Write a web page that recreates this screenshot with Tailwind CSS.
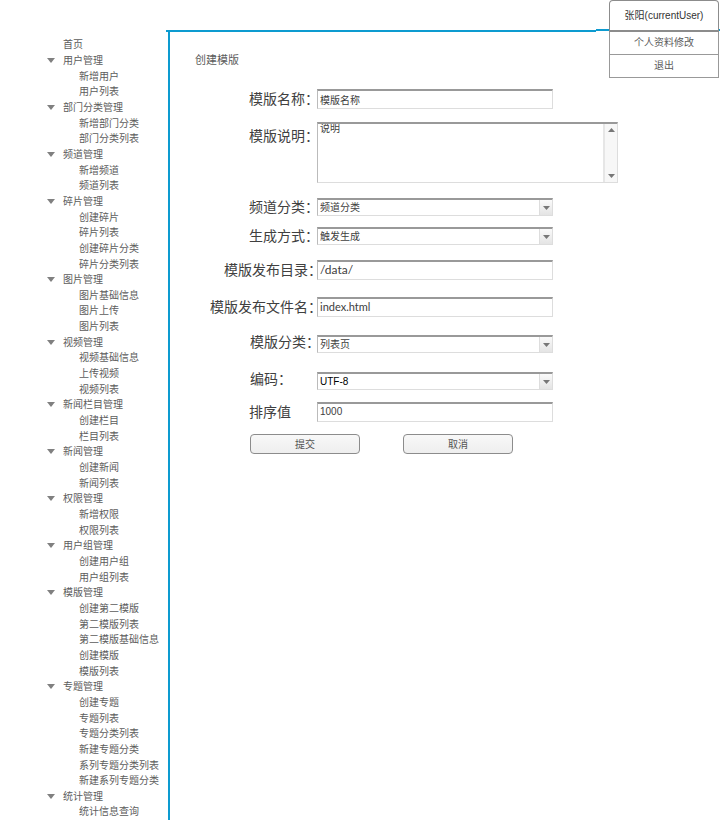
<!DOCTYPE html>
<html lang="zh-CN">
<head>
<meta charset="utf-8">
<meta name="viewport" content="width=device-width, initial-scale=1">
<title>创建模版</title>
<script src="https://cdn.jsdelivr.net/npm/@tailwindcss/browser@4"></script>
</head>
<body class="flex min-h-screen flex-col bg-white font-['Liberation_Sans','Noto_Sans_CJK_SC',sans-serif] text-[10px] leading-[15px] text-[#5c5c5c]">
<header class="ml-[166px] flex h-8 items-start">
  <div class="h-8 flex-1 border-b-2 border-[#0d9bd0]"></div>
  <div class="relative h-[31px] w-[124px] border-b-2 border-[#0d9bd0]">
    <div class="absolute top-0 right-px w-[110px] bg-white text-center">
      <button type="button" class="block h-8 w-full rounded-t border border-b-2 border-[#8c8c8c] text-[#333]">张阳(currentUser)</button>
      <a href="#" class="block h-[23px] border border-t-0 border-[#999] leading-[22px]">个人资料修改</a>
      <a href="#" class="block h-[23px] border border-t-0 border-[#999] leading-[22px]">退出</a>
    </div>
  </div>
</header>
<div class="flex flex-1">
  <nav class="flex w-[168px] shrink-0 flex-col pt-[5px]" aria-label="主导航">
    <ul id="menu" class="flex flex-1 flex-col whitespace-nowrap"></ul>
  </nav>
  <main class="flex-1 border-l-2 border-[#0d9bd0]">
    <h1 class="mt-5 ml-[25px] text-[11px] leading-4">创建模版</h1>
    <form class="mt-[21px] ml-10 text-[#404040]">
      <div class="flex">
        <label for="name" class="w-[107px] shrink-0 pl-[39px] text-sm leading-5 whitespace-nowrap">模版名称：</label>
        <input id="name" value="模版名称" class="h-5 w-[236px] border border-t-2 border-[#ddd] border-t-[#999] border-l-[#bbb] bg-white px-0.5 outline-none">
      </div>
      <div class="mt-[13px] flex">
        <label for="desc" class="w-[107px] shrink-0 pt-1 pl-[39px] text-sm leading-5 whitespace-nowrap">模版说明：</label>
        <div class="flex h-[61px] w-[301px] border border-t-2 border-[#ddd] border-t-[#999] border-l-[#bbb] bg-white">
          <textarea id="desc" class="flex-1 resize-none overflow-hidden px-0.5 leading-[10px] outline-none">说明</textarea>
          <div class="flex w-[14px] flex-col items-center justify-between border-l-2 border-[#e6e6e6] bg-[#f7f7f7] py-1 text-[#777]">
            <svg class="h-1 w-[7px]" viewBox="0 0 7 4" fill="currentColor" aria-hidden="true"><path d="M3.5 0 7 4H0Z"/></svg>
            <svg class="h-1 w-[7px]" viewBox="0 0 7 4" fill="currentColor" aria-hidden="true"><path d="M0 0H7L3.5 4Z"/></svg>
          </div>
        </div>
      </div>
      <div class="mt-[15px] flex">
        <label for="channel" class="w-[107px] shrink-0 pl-[39px] text-sm leading-[18px] whitespace-nowrap">频道分类：</label>
        <div class="relative h-[18px] w-[236px]">
          <select id="channel" class="block h-full w-full appearance-none border border-t-2 border-[#ddd] border-t-[#999] border-l-[#bbb] bg-white px-0.5 leading-[15px] outline-none"><option>频道分类</option></select>
          <span class="pointer-events-none absolute top-0.5 right-px bottom-px flex w-[13px] items-center justify-center border-l border-[#ddd] bg-linear-to-b from-[#fafafa] to-[#e4e4e4] text-[#777]"><svg class="h-1 w-[7px]" viewBox="0 0 7 4" fill="currentColor" aria-hidden="true"><path d="M0 0H7L3.5 4Z"/></svg></span>
        </div>
      </div>
      <div class="mt-[11px] flex">
        <label for="mode" class="w-[107px] shrink-0 pl-[39px] text-sm leading-[18px] whitespace-nowrap">生成方式：</label>
        <div class="relative h-[18px] w-[236px]">
          <select id="mode" class="block h-full w-full appearance-none border border-t-2 border-[#ddd] border-t-[#999] border-l-[#bbb] bg-white px-0.5 leading-[15px] outline-none"><option>触发生成</option></select>
          <span class="pointer-events-none absolute top-0.5 right-px bottom-px flex w-[13px] items-center justify-center border-l border-[#ddd] bg-linear-to-b from-[#fafafa] to-[#e4e4e4] text-[#777]"><svg class="h-1 w-[7px]" viewBox="0 0 7 4" fill="currentColor" aria-hidden="true"><path d="M0 0H7L3.5 4Z"/></svg></span>
        </div>
      </div>
      <div class="mt-[15px] flex">
        <label for="dir" class="w-[107px] shrink-0 pl-[14px] text-sm leading-5 whitespace-nowrap">模版发布目录：</label>
        <input id="dir" value="/data/" class="h-5 w-[236px] border border-t-2 border-[#ddd] border-t-[#999] border-l-[#bbb] bg-white px-0.5 pb-0.5 font-[Lato,sans-serif] text-xs outline-none">
      </div>
      <div class="mt-[17px] flex">
        <label for="file" class="w-[107px] shrink-0 text-sm leading-5 whitespace-nowrap">模版发布文件名：</label>
        <input id="file" value="index.html" class="h-5 w-[236px] border border-t-2 border-[#ddd] border-t-[#999] border-l-[#bbb] bg-white px-0.5 pb-0.5 font-[Lato,sans-serif] text-[11px] outline-none">
      </div>
      <div class="mt-[18px] flex">
        <label for="type" class="w-[107px] shrink-0 pl-10 text-sm leading-[14px] whitespace-nowrap">模版分类：</label>
        <div class="relative h-[18px] w-[236px]">
          <select id="type" class="block h-full w-full appearance-none border border-t-2 border-[#ddd] border-t-[#999] border-l-[#bbb] bg-white px-0.5 leading-[15px] outline-none"><option>列表页</option></select>
          <span class="pointer-events-none absolute top-0.5 right-px bottom-px flex w-[13px] items-center justify-center border-l border-[#ddd] bg-linear-to-b from-[#fafafa] to-[#e4e4e4] text-[#777]"><svg class="h-1 w-[7px]" viewBox="0 0 7 4" fill="currentColor" aria-hidden="true"><path d="M0 0H7L3.5 4Z"/></svg></span>
        </div>
      </div>
      <div class="mt-[19px] flex">
        <label for="enc" class="w-[107px] shrink-0 pl-10 text-sm leading-[14px] whitespace-nowrap">编码：</label>
        <div class="relative h-[18px] w-[236px]">
          <select id="enc" class="block h-full w-full appearance-none border border-t-2 border-[#ddd] border-t-[#999] border-l-[#bbb] bg-white px-0.5 leading-[15px] text-black outline-none"><option>UTF-8</option></select>
          <span class="pointer-events-none absolute top-0.5 right-px bottom-px flex w-[13px] items-center justify-center border-l border-[#ddd] bg-linear-to-b from-[#fafafa] to-[#e4e4e4] text-[#777]"><svg class="h-1 w-[7px]" viewBox="0 0 7 4" fill="currentColor" aria-hidden="true"><path d="M0 0H7L3.5 4Z"/></svg></span>
        </div>
      </div>
      <div class="mt-3 flex">
        <label for="order" class="w-[107px] shrink-0 pl-[39px] text-sm leading-5 whitespace-nowrap">排序值</label>
        <input id="order" value="1000" class="h-5 w-[236px] border border-t-2 border-[#ddd] border-t-[#999] border-l-[#bbb] bg-white px-0.5 pb-0.5 outline-none">
      </div>
      <div class="mt-3 ml-10 flex gap-[43px] text-[#555]">
        <button type="submit" class="h-5 w-[110px] rounded border border-[#8c8c8c] bg-linear-to-b from-[#f8f8f8] to-[#eee]">提交</button>
        <button type="button" class="h-5 w-[110px] rounded border border-[#8c8c8c] bg-linear-to-b from-[#f8f8f8] to-[#eee]">取消</button>
      </div>
    </form>
  </main>
</div>
<script>
const groups = [
  ['首页'],
  ['用户管理', '新增用户', '用户列表'],
  ['部门分类管理', '新增部门分类', '部门分类列表'],
  ['频道管理', '新增频道', '频道列表'],
  ['碎片管理', '创建碎片', '碎片列表', '创建碎片分类', '碎片分类列表'],
  ['图片管理', '图片基础信息', '图片上传', '图片列表'],
  ['视频管理', '视频基础信息', '上传视频', '视频列表'],
  ['新闻栏目管理', '创建栏目', '栏目列表'],
  ['新闻管理', '创建新闻', '新闻列表'],
  ['权限管理', '新增权限', '权限列表'],
  ['用户组管理', '创建用户组', '用户组列表'],
  ['模版管理', '创建第二模版', '第二模版列表', '第二模版基础信息', '创建模版', '模版列表'],
  ['专题管理', '创建专题', '专题列表', '专题分类列表', '新建专题分类', '系列专题分类列表', '新建系列专题分类'],
  ['统计管理', '统计信息查询']
];
const arrow = '<svg class="mr-2 h-[5px] w-2 text-[#808080]" viewBox="0 0 8 5" fill="currentColor" aria-hidden="true"><path d="M0 0H8L4 5Z"/></svg>';
document.getElementById('menu').innerHTML = groups.map(([head, ...items]) =>
  (items.length
    ? `<li class="flex flex-1 items-center pl-[47px]">${arrow}<a href="#">${head}</a></li>`
    : `<li class="flex flex-1 items-center pl-[63px]"><a href="#">${head}</a></li>`) +
  items.map(t => `<li class="flex flex-1 items-center pl-[79px]"><a href="#">${t}</a></li>`).join('')
).join('');
</script>
</body>
</html>
